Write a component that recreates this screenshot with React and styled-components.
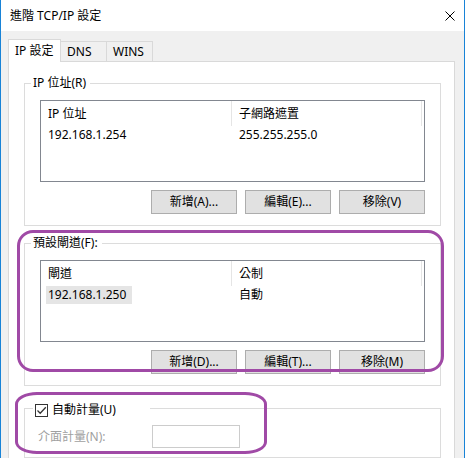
import styled, { createGlobalStyle } from 'styled-components';

const GlobalStyle = createGlobalStyle`
	html, body {
		margin: 0;
		padding: 0;
		background: #ffffff;
	}
	body {
		font-family: "Noto Sans", "Noto Sans CJK TC", sans-serif;
		font-size: 12px;
		color: #000;
	}
	* {
		box-sizing: border-box;
	}
`;

const Window = styled.div`
	position: relative;
	width: 465px;
	height: 458px;
	overflow: hidden;
	display: flex;
	flex-direction: column;
	background: #f0f0f0;
	border-left: 1px solid #1883d7;
	border-right: 1px solid #1883d7;
`;

const TitleBar = styled.div`
	height: 31px;
	flex: none;
	display: flex;
	align-items: center;
	justify-content: space-between;
	padding: 0 9px 0 9px;
	background: #ffffff;
	line-height: 16px;
`;

const Body = styled.div`
	flex: 1;
	display: flex;
	flex-direction: column;
	padding: 8px 9px 0 7px;
`;

const TabStrip = styled.div`
	height: 22px;
	display: flex;
	align-items: flex-end;
`;

const Tab = styled.div`
	position: relative;
	width: ${(p) => p.$width}px;
	height: ${(p) => (p.$selected ? 23 : 20)}px;
	margin-left: ${(p) => (p.$first ? 0 : -1)}px;
	margin-bottom: ${(p) => (p.$selected ? -1 : 0)}px;
	z-index: ${(p) => (p.$selected ? 1 : 0)};
	padding-left: 6px;
	display: flex;
	align-items: center;
	background: ${(p) => (p.$selected ? '#ffffff' : '#f0f0f0')};
	border: 1px solid #d9d9d9;
	border-bottom: none;
	line-height: 16px;
`;

const Panel = styled.div`
	flex: 1;
	background: #ffffff;
	border: 1px solid #d9d9d9;
	padding: 21px 13px 0 15px;
`;

const GroupBox = styled.div`
	position: relative;
	border: 1px solid #dcdcdc;
	padding: 16px 15px ${(p) => p.$bottom || 11}px ${(p) => p.$left || 15}px;
	margin-bottom: ${(p) => p.$gap || 0}px;
`;

const GroupLabel = styled.div`
	position: absolute;
	top: -9px;
	left: 6px;
	padding: 0 4px 0 2px;
	background: #ffffff;
	line-height: 16px;
`;

const CheckLegend = styled.label`
	position: absolute;
	top: -7px;
	left: 8px;
	width: 117px;
	height: 16px;
	padding-left: 2px;
	display: flex;
	align-items: center;
	gap: 4px;
	background: #ffffff;
	line-height: 16px;
`;

const CheckBox = styled.span`
	width: 13px;
	height: 13px;
	flex: none;
	display: flex;
	align-items: center;
	justify-content: center;
	border: 1px solid #333333;
	background: #ffffff;
`;

const ListView = styled.div`
	height: 82px;
	border: 1px solid #828790;
	background: #ffffff;
`;

const HeaderRow = styled.div`
	display: grid;
	grid-template-columns: 191px 190px;
	height: 25px;
`;

const HeaderCell = styled.div`
	padding-left: 7px;
	line-height: 25px;
	border-right: 1px solid #e5e5e5;
`;

const Row = styled.div`
	display: grid;
	grid-template-columns: 191px 190px;
	height: 18px;
`;

const Cell = styled.div`
	padding-left: 5px;
	display: flex;
`;

const CellText = styled.span`
	padding: 0 6px 0 2px;
	line-height: 18px;
	background: ${(p) => (p.$selected ? '#e5e5e5' : 'transparent')};
`;

const ButtonRow = styled.div`
	display: flex;
	justify-content: flex-end;
	gap: 8px;
	margin-top: 8px;
`;

const Button = styled.button`
	width: 86px;
	height: 24px;
	padding: 0;
	font: inherit;
	line-height: 16px;
	color: #000;
	background: #e1e1e1;
	border: 1px solid #adadad;
	border-radius: 0;
`;

const FieldRow = styled.div`
	display: flex;
	align-items: center;
`;

const FieldLabel = styled.span`
	width: 114px;
	color: #a0a0a0;
	line-height: 16px;
`;

const NumberBox = styled.div`
	width: 88px;
	height: 23px;
	border: 1px solid #cccccc;
	background: #ffffff;
`;

const Mark = styled.div`
	position: absolute;
	left: ${(p) => p.$x - 1}px;
	top: ${(p) => p.$y}px;
	width: ${(p) => p.$w}px;
	height: ${(p) => p.$h}px;
	border: 3px solid #a04aa6;
	border-radius: ${(p) => p.$radius};
	pointer-events: none;
`;

const CloseIcon = () => (
	<svg width="10" height="10" viewBox="0 0 10 10">
		<path d="M0.5 0.5 L9.5 9.5 M9.5 0.5 L0.5 9.5" stroke="#000" strokeWidth="1" />
	</svg>
);

const CheckMark = () => (
	<svg width="11" height="11" viewBox="0 0 11 11">
		<polyline points="1.5,5.5 4.2,8.2 9.8,2.2" fill="none" stroke="#333" strokeWidth="1.3" />
	</svg>
);

const List = ({ columns, rows }) => (
	<ListView>
		<HeaderRow>
			{columns.map((c) => (
				<HeaderCell key={c}>{c}</HeaderCell>
			))}
		</HeaderRow>
		{rows.map((r, i) => (
			<Row key={i}>
				{r.cells.map((c, j) => (
					<Cell key={j}>
						<CellText $selected={r.selected && j === 0}>{c}</CellText>
					</Cell>
				))}
			</Row>
		))}
	</ListView>
);

function App() {
	return (
		<>
			<GlobalStyle />
			<Window>
				<TitleBar>
					<span>進階 TCP/IP 設定</span>
					<CloseIcon />
				</TitleBar>
				<Body>
					<TabStrip>
						<Tab $selected $first $width={53}>IP 設定</Tab>
						<Tab $width={47}>DNS</Tab>
						<Tab $width={47}>WINS</Tab>
					</TabStrip>
					<Panel>
						<GroupBox $gap={17}>
							<GroupLabel>IP 位址(R)</GroupLabel>
							<List
								columns={['IP 位址', '子網路遮置']}
								rows={[{ cells: ['192.168.1.254', '255.255.255.0'] }]}
							/>
							<ButtonRow>
								<Button>新增(A)...</Button>
								<Button>編輯(E)...</Button>
								<Button>移除(V)</Button>
							</ButtonRow>
						</GroupBox>
						<GroupBox $gap={22}>
							<GroupLabel>預設閘道(F):</GroupLabel>
							<List
								columns={['閘道', '公制']}
								rows={[{ cells: ['192.168.1.250', '自動'], selected: true }]}
							/>
							<ButtonRow>
								<Button>新增(D)...</Button>
								<Button>編輯(T)...</Button>
								<Button>移除(M)</Button>
							</ButtonRow>
						</GroupBox>
						<GroupBox $left={13} $bottom={9}>
							<CheckLegend>
								<CheckBox>
									<CheckMark />
								</CheckBox>
								自動計量(U)
							</CheckLegend>
							<FieldRow>
								<FieldLabel>介面計量(N):</FieldLabel>
								<NumberBox />
							</FieldRow>
						</GroupBox>
					</Panel>
				</Body>
				<Mark $x={17} $y={230} $w={427} $h={142} $radius="16px" />
				<Mark $x={15} $y={392} $w={252} $h={62} $radius="22px / 12px" />
			</Window>
		</>
	);
}

export default App;
